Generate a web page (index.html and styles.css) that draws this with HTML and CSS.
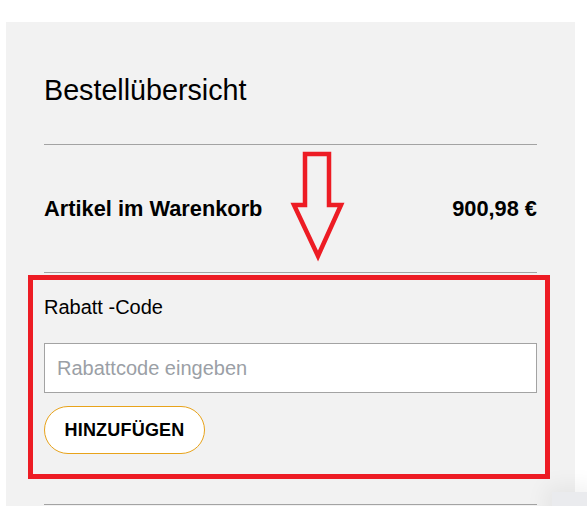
FILE: index.html
```html
<!DOCTYPE html>
<html lang="de">
<head>
<meta charset="utf-8">
<title>Bestellübersicht</title>
<link rel="stylesheet" href="styles.css">
</head>
<body>
<div class="panel">
  <h2 class="title">Bestellübersicht</h2>
  <hr class="rule">
  <div class="row">
    <span class="row-label">Artikel im Warenkorb</span>
    <span class="row-value">900,98 €</span>
  </div>
  <hr class="rule">
  <div class="coupon">
    <label class="coupon-label" for="code">Rabatt -Code</label>
    <input class="coupon-input" id="code" type="text" placeholder="Rabattcode eingeben">
    <button class="coupon-btn" type="button">HINZUFÜGEN</button>
  </div>
  <hr class="rule">

  <svg class="arrow" width="64" height="116" viewBox="0 0 64 116" aria-hidden="true">
    <polygon points="19,6 43,6 43,57 55,57 32,108 8,57 19,57" fill="none" stroke="#ed1c24" stroke-width="4.5" stroke-linejoin="miter"/>
  </svg>
  <div class="highlight"></div>
</div>
<div class="corner"></div>
</body>
</html>
```
FILE: styles.css
```css
html, body {
  margin: 0;
  padding: 0;
  background: #ffffff;
}
body {
  font-family: "Liberation Sans", Arial, sans-serif;
  color: #000;
  overflow: hidden;
  height: 506px;
}
.panel {
  position: relative;
  margin: 22px 0 0 6px;
  width: 569px;
  box-sizing: border-box;
  padding: 52px 38px 60px 38px;
  background: #f2f2f2;
}
.title {
  margin: 0;
  font-size: 28.7px;
  line-height: 32px;
  font-weight: normal;
}
.rule {
  margin: 0;
  border: 0;
  height: 1px;
  background: #a3a3a3;
}
.title + .rule {
  margin-top: 38px;
}
.row {
  display: flex;
  justify-content: space-between;
  align-items: baseline;
  padding: 51px 0 50px;
  font-size: 21.8px;
  line-height: 26px;
  font-weight: bold;
}
.coupon {
  display: flex;
  flex-direction: column;
  align-items: flex-start;
  padding: 22px 0 50px;
}
.coupon-label {
  font-size: 20px;
  line-height: 24px;
}
.coupon-input {
  margin-top: 24px;
  width: 100%;
  height: 50px;
  box-sizing: border-box;
  border: 1px solid #a3a3a3;
  border-radius: 0;
  background: #fff;
  padding: 0 12px;
  font-family: "Liberation Sans", Arial, sans-serif;
  font-size: 20px;
  color: #000;
  outline: none;
}
.coupon-input::placeholder {
  color: #9b9fa6;
  opacity: 1;
}
.coupon-btn {
  margin-top: 13px;
  height: 48px;
  width: 161px;
  box-sizing: border-box;
  border: 1px solid #e8a31b;
  border-radius: 24px;
  background: #fff;
  font-family: "Liberation Sans", Arial, sans-serif;
  font-size: 18px;
  font-weight: bold;
  color: #000;
  padding: 0;
  letter-spacing: 0.2px;
}
.arrow {
  position: absolute;
  left: 280px;
  top: 126px;
}
.highlight {
  position: absolute;
  left: 22px;
  top: 253px;
  width: 522px;
  height: 204px;
  box-sizing: border-box;
  border: 5px solid #ed1c24;
  pointer-events: none;
}
.corner {
  position: fixed;
  left: 552px;
  top: 492px;
  width: 40px;
  height: 40px;
  background: #eaebee;
  box-shadow: 0 0 22px 6px rgba(0, 0, 0, 0.06);
}
```
